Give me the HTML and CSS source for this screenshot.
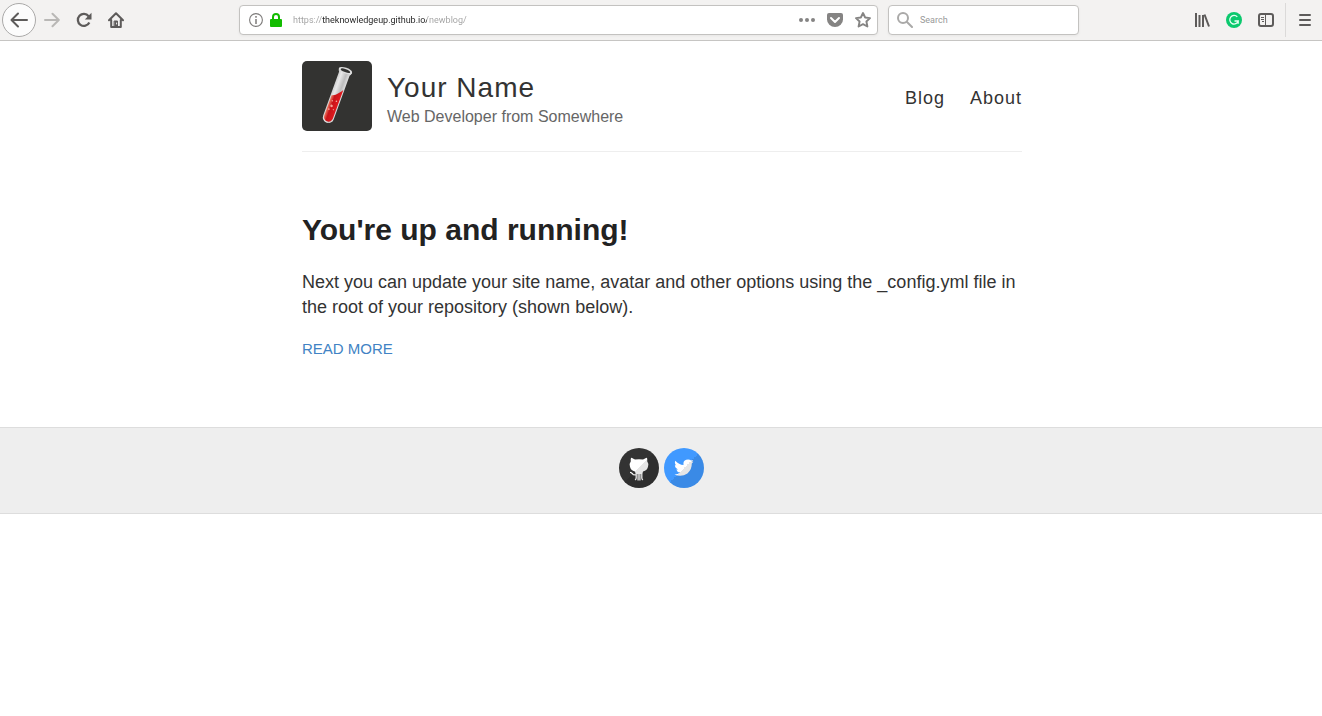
FILE: index.html
```html
<!DOCTYPE html>
<html lang="en">
<head>
<meta charset="utf-8">
<title>Your Name – Web Developer from Somewhere</title>
<link rel="stylesheet" href="styles.css">
</head>
<body>
<div class="toolbar">
  <div class="nav-buttons">
    <button class="back-button" aria-label="Back">
      <svg width="34" height="34" viewBox="0 0 34 34" fill="none"><circle cx="17" cy="17" r="16.5" fill="#fcfcfc" stroke="#aaa9a8"/><path d="M25 17H10.500M16 10.500L9.500 17l6.500 6.500" stroke="#5d5b5a" stroke-width="2" stroke-linecap="round" stroke-linejoin="round"/></svg>
    </button>
    <button class="tool-button" aria-label="Forward" disabled>
      <svg width="16" height="16" viewBox="0 0 16 16" fill="none" stroke="#b9b8b6" stroke-width="2" stroke-linecap="round" stroke-linejoin="round"><path d="M1 8h13M8.500 1.800L14.800 8l-6.300 6.200"/></svg>
    </button>
    <button class="tool-button" aria-label="Reload">
      <svg width="16" height="16" viewBox="0 0 16 16" fill="none" stroke="#5d5b5a" stroke-width="2.300"><path d="M13.300 10.500A6 6 0 1 1 12.600 4.200"/><path d="M15.500 .8V7.500H8.800z" fill="#5d5b5a" stroke="none"/></svg>
    </button>
    <button class="tool-button" aria-label="Home">
      <svg width="16" height="16" viewBox="0 0 16 16" fill="none" stroke="#5d5b5a" stroke-width="2" stroke-linejoin="round" stroke-linecap="round"><path d="M1 8.300L8 1.300l7 7M3.200 8v7h9.600V8"/><path d="M6.500 9h3v6h-3z" fill="#5d5b5a" stroke-width="1"/><path d="M8.600 11v1" stroke="#f3f2f1" stroke-width="1"/></svg>
    </button>
  </div>
  <form class="address-bar">
    <svg width="14" height="14" viewBox="0 0 14 14" fill="none" stroke="#7d7b7a"><circle cx="7" cy="7" r="6.400" stroke-width="1.100"/><path d="M7 6v5M7 3v1.700" stroke-width="1.500"/></svg>
    <svg class="lock" width="12" height="14" viewBox="0 0 12 14"><path d="M3 7V4a3 3 0 0 1 6 0v3" fill="none" stroke="#12bc00" stroke-width="2"/><rect y="6" width="12" height="8" rx="1" fill="#12bc00"/></svg>
    <input class="address-input" type="text" aria-label="Address" value="https://theknowledgeup.github.io/newblog/">
    <button class="tool-icon" type="button" aria-label="Page actions">
      <svg width="16" height="16" viewBox="0 0 16 16" fill="#858483"><circle cx="2" cy="8" r="2"/><circle cx="8" cy="8" r="2"/><circle cx="14" cy="8" r="2"/></svg>
    </button>
    <button class="tool-icon" type="button" aria-label="Save to Pocket">
      <svg width="16" height="16" viewBox="0 0 16 16"><path d="M2 1h12a2 2 0 0 1 2 2v4.500a8 7.500 0 0 1-16 0V3a2 2 0 0 1 2-2z" fill="#858483"/><path d="M4 6l4 4 4-4" fill="none" stroke="#fff" stroke-width="2" stroke-linecap="round" stroke-linejoin="round"/></svg>
    </button>
    <button class="tool-icon" type="button" aria-label="Bookmark">
      <svg width="16" height="16" viewBox="0 0 16 16" fill="none" stroke="#858483" stroke-width="1.900" stroke-linejoin="round"><path d="M8 1l2.150 4.500 4.850.6-3.600 3.400 1 5L8 12.100l-4.400 2.400 1-5L1 6.100l4.850-.6z"/></svg>
    </button>
  </form>
  <form class="search-bar">
    <svg width="16" height="16" viewBox="0 0 16 16" fill="none" stroke="#aaa9a8" stroke-width="2" stroke-linecap="round"><circle cx="6" cy="6" r="5"/><path d="M10 10l5 5"/></svg>
    <input class="search-input" type="text" aria-label="Search" placeholder="Search">
  </form>
  <div class="extension-buttons">
    <button class="tool-button" aria-label="Library">
      <svg width="16" height="16" viewBox="0 0 16 16" fill="none" stroke="#5d5b5a" stroke-width="2"><path d="M2 1v14M5.500 3v12M9 3v12M10.500 2.500L15 14.500"/></svg>
    </button>
    <button class="tool-button" aria-label="Writing assistant">
      <svg width="16" height="16" viewBox="0 0 16 16"><circle cx="8" cy="8" r="8" fill="#0bc96e"/><path d="M11.300 4.900A4.300 4.300 0 1 0 12.200 9H8.500M12.200 9v2.800" fill="none" stroke="#e9fff3" stroke-width="1.300"/></svg>
    </button>
    <button class="tool-button" aria-label="Sidebars">
      <svg width="16" height="16" viewBox="0 0 16 16" fill="none" stroke="#5d5b5a"><rect x="1" y="2" width="14" height="12" rx="2" stroke-width="2"/><path d="M7.500 2v12M3 5.500h3M3 7.500h3M4 9.500h2"/></svg>
    </button>
    <button class="menu-button" aria-label="Menu">
      <svg width="16" height="16" viewBox="0 0 16 16" stroke="#5d5b5a" stroke-width="2" stroke-linecap="round"><path d="M3 3h10M3 8h10M3 13h10"/></svg>
    </button>
  </div>
</div>

<div class="container">
  <header class="masthead">
    <a class="site-avatar" href="#" aria-label="Home page">
      <svg width="70" height="70" viewBox="0 0 70 70">
        <defs>
          <linearGradient id="glass"><stop offset="0" stop-color="#c4c4c4"/><stop offset=".3" stop-color="#e8e8e8"/><stop offset=".65" stop-color="#bdbdbd"/><stop offset="1" stop-color="#eee"/></linearGradient>
          <linearGradient id="liquid"><stop offset="0" stop-color="#ee7a62"/><stop offset=".35" stop-color="#c8141a"/><stop offset="1" stop-color="#e01a1e"/></linearGradient>
        </defs>
        <rect width="70" height="70" fill="#333331"/>
        <g transform="translate(43.500 9.500) rotate(20)">
          <path d="M-7 0q.3 2.500 1.400 3.500V50a5.600 5.600 0 0 0 11.200 0V3.500Q6.700 2.500 7 0z" fill="url(#glass)"/>
          <path d="M-4.600 28Q-1 27 1.500 23.500T4.600 19V49.500a4.600 4.600 0 0 1-9.200 0z" fill="url(#liquid)"/>
          <ellipse rx="7" ry="2.800" fill="#dedede"/>
          <ellipse cy=".2" rx="5" ry="1.500" fill="#333331"/>
          <g fill="#f4a598"><circle cx="-1" cy="38" r="1.300"/><circle cx="2" cy="32" r=".8"/><circle cx="-2" cy="33" r=".7"/><circle cx="-2.500" cy="42" r=".8"/><circle cx="2" cy="41" r=".6"/></g>
        </g>
      </svg>
    </a>
    <div class="site-info">
      <h1 class="site-name"><a href="#">Your Name</a></h1>
      <p class="site-description">Web Developer from Somewhere</p>
    </div>
    <nav class="site-nav">
      <a href="#">Blog</a>
      <a href="#">About</a>
    </nav>
  </header>

  <main>
    <article class="post">
      <h1 class="post-title"><a href="#">You're up and running!</a></h1>
      <p class="entry">Next you can update your site name, avatar and other options using the _config.yml file in the root of your repository (shown below).</p>
      <a class="read-more" href="#">READ MORE</a>
    </article>
  </main>
</div>

<footer class="footer">
  <a class="social" href="#" aria-label="GitHub">
    <svg width="40" height="40" viewBox="0 0 40 40">
      <defs>
        <linearGradient id="shade" gradientUnits="userSpaceOnUse" x2="40" y2="40"><stop offset=".5" stop-color="#fff"/><stop offset=".5" stop-color="#e6e6e6"/></linearGradient>
        <linearGradient id="dark" gradientUnits="userSpaceOnUse" x2="40" y2="40"><stop offset=".5" stop-color="#333"/><stop offset=".5" stop-color="#2e2e2e"/></linearGradient>
      </defs>
      <circle cx="20" cy="20" r="20" fill="url(#dark)"/>
      <path d="M12 10q.3-.5 1 0l3 1.600q4-.8 8 0L27 10q.7-.5 1 0 .5 1.500.2 3.200 1.500 2 .9 5-.7 4.300-5.100 5.200-.4 1.600-.8 2.600h-6.400L15.900 23.400q-4.300-.9-5-5.200-.6-3 .9-5Q11.500 11.500 12 10z" fill="url(#shade)"/>
      <path d="M17.200 25.500v4.500q0 1.300-1.200 1.800M19.100 25.500v7M20.900 25.500v7M22.800 25.500v4.500q0 1.300 1.200 1.800M17 26.800q-2.800.4-3.700-1.100-.8-1.300-2.300-1.300" fill="none" stroke="url(#shade)" stroke-width="1.300"/>
    </svg>
  </a>
  <a class="social" href="#" aria-label="Twitter">
    <svg width="40" height="40" viewBox="0 0 40 40">
      <defs><linearGradient id="sky" gradientUnits="userSpaceOnUse" x2="40" y2="40"><stop offset=".5" stop-color="#4099ff"/><stop offset=".5" stop-color="#3a8ae6"/></linearGradient></defs>
      <circle cx="20" cy="20" r="20" fill="url(#sky)"/>
      <path d="M11.300 12.800q3.600 4 8.200 4.300-.6-4.300 2.700-5.300 2.700-1 5 .7l2-.6-1 2 1.200-.2-1.600 1.900q.1 6.200-4.400 9.800-6.200 4.300-13 1 3.500.2 5.600-1.900-3-.4-3.700-3l1.700-.1q-3-1.200-3.100-4.300l1.500.4q-2.300-2-1.100-4.700z" fill="url(#shade)"/>
    </svg>
  </a>
</footer>
</body>
</html>
```
FILE: styles.css
```css
* { box-sizing: border-box; }

body {
  margin: 0;
  background: #fff;
  color: #222;
  font: 18px/25px "Liberation Sans", Helvetica, Arial, sans-serif;
}

h1, p { margin: 0; }
a { color: inherit; text-decoration: none; }
svg { display: block; flex: none; }

button {
  display: flex;
  align-items: center;
  justify-content: center;
  flex: none;
  padding: 0;
  border: 0;
  background: none;
}

input {
  flex: 1;
  min-width: 0;
  height: 20px;
  padding: 0;
  border: 0;
  outline: 0;
  background: none;
  font: 9px/20px Roboto, sans-serif;
}

/* Browser toolbar */
.toolbar {
  display: flex;
  align-items: center;
  height: 41px;
  background: #f3f2f1;
  border-bottom: 1px solid #c6c5c3;
}

.nav-buttons {
  display: flex;
  align-items: center;
  flex: 1 1 0;
  padding-left: 2px;
}

.back-button { width: 34px; height: 34px; }
.tool-button { width: 32px; height: 32px; }

.address-bar,
.search-bar {
  display: flex;
  align-items: center;
  height: 30px;
  border: 1px solid #c3c2c0;
  border-radius: 4px;
  background: #fff;
  box-shadow: 0 1px 3px rgba(0, 0, 0, 0.05);
}

.address-bar { flex: 0 1 639px; padding-left: 9px; }
.search-bar { flex: 0 1 191px; margin-left: 10px; padding: 0 8px; }

.lock { margin-left: 7px; }

.address-input {
  margin-left: 11px;
  color: #333;
  background: linear-gradient(to right, #a0a0a0 29px, #222 29px, #222 134px, #a0a0a0 134px);
  -webkit-background-clip: text;
  background-clip: text;
  -webkit-text-fill-color: transparent;
}

.search-input { margin-left: 7px; }
.search-input::placeholder { color: #999; opacity: 1; }

.tool-icon { width: 28px; height: 28px; }

.extension-buttons {
  display: flex;
  align-items: center;
  justify-content: flex-end;
  flex: 1 1 6px;
}

.menu-button {
  width: 37px;
  height: 34px;
  margin-left: 3px;
  padding-left: 2px;
  border-left: 1px solid #dbdad9;
}

/* Page */
.container {
  max-width: 742px;
  margin: 0 auto;
  padding: 0 10px 0 12px;
}

.masthead {
  display: flex;
  align-items: center;
  padding: 20px 0;
  border-bottom: 1px solid #eee;
}

.site-avatar {
  margin-right: 15px;
  border-radius: 5px;
  overflow: hidden;
}

.site-info { padding-top: 9px; }

.site-name {
  color: #333;
  font-size: 28px;
  font-weight: 400;
  line-height: 32px;
  letter-spacing: 1px;
}

.site-description { color: #666; font-size: 16px; }

.site-nav {
  display: flex;
  gap: 25px;
  margin-left: auto;
  padding-top: 5px;
  color: #333;
  letter-spacing: 1px;
}

.post { padding: 60px 0 66px; }

.post-title {
  margin-bottom: 22px;
  font-size: 30px;
  line-height: 36px;
}

.entry { margin-bottom: 16px; color: #333; }

.read-more { color: #4183c4; font-size: 15px; }

.footer {
  display: flex;
  justify-content: center;
  gap: 5px;
  padding: 20px 0 25px;
  border: solid #ddd;
  border-width: 1px 0;
  background: #eee;
}
```
